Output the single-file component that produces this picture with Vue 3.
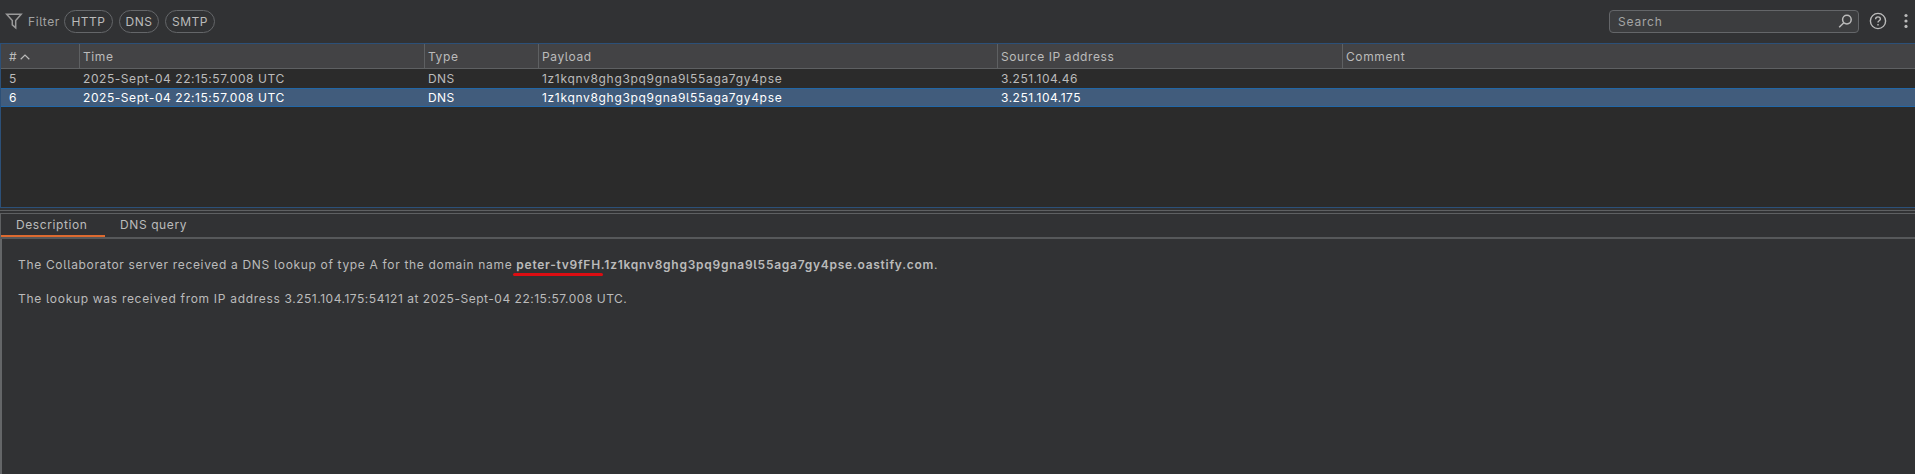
<script setup>
const filters = [
  { name: 'HTTP', kind: 'http' },
  { name: 'DNS', kind: 'dns' },
  { name: 'SMTP', kind: 'smtp' },
]
const columns = ['#', 'Time', 'Type', 'Payload', 'Source IP address', 'Comment']
const payload = '1z1kqnv8ghg3pq9gna9l55aga7gy4pse'
const rows = [
  { id: 5, time: '2025-Sept-04 22:15:57.008 UTC', type: 'DNS', ip: '3.251.104.46' },
  { id: 6, time: '2025-Sept-04 22:15:57.008 UTC', type: 'DNS', ip: '3.251.104.175', selected: true },
]
</script>

<template>
  <div class="panel">
    <header class="toolbar">
      <svg class="funnel" width="18" height="18" viewBox="0 0 18 18">
        <path d="M1.6 2.2H16.2L10.7 8.6V15.9L7.3 12.9V8.6Z" />
      </svg>
      <span class="filter-label">Filter</span>
      <button v-for="f in filters" :key="f.name" class="chip" :class="f.kind">{{ f.name }}</button>
      <div class="search">
        <span>Search</span>
        <svg width="15" height="15" viewBox="0 0 15 15">
          <circle cx="8.9" cy="5.6" r="4.3" />
          <path d="M5.8 8.7L1.2 13.3" />
        </svg>
      </div>
      <svg class="help" width="18" height="18" viewBox="0 0 18 18">
        <circle cx="9" cy="9" r="7.6" />
        <path d="M6.6 7.2C6.6 4.2 11.4 4.2 11.4 7C11.4 8.8 9 8.8 9 10.5" />
        <path d="M9 12V13.4" />
      </svg>
      <svg class="more" width="4" height="16" viewBox="0 0 4 16">
        <circle cx="2" cy="2.5" r="1.6" />
        <circle cx="2" cy="8" r="1.6" />
        <circle cx="2" cy="13.4" r="1.6" />
      </svg>
    </header>

    <section class="table">
      <div class="grid head">
        <div v-for="(c, i) in columns" :key="c" class="cell">
          {{ c }}
          <svg v-if="i === 0" class="sort" width="10" height="6" viewBox="0 0 10 6">
            <path d="M.7 5.2L5 1L9.3 5.2" />
          </svg>
        </div>
      </div>
      <div v-for="r in rows" :key="r.id" class="grid row" :class="{ selected: r.selected }">
        <div class="cell">{{ r.id }}</div>
        <div class="cell time">{{ r.time }}</div>
        <div class="cell type">{{ r.type }}</div>
        <div class="cell payload">{{ payload }}</div>
        <div class="cell ip">{{ r.ip }}</div>
        <div class="cell"></div>
      </div>
    </section>

    <div class="splitter"></div>

    <nav class="tabs">
      <div class="tab active">Description</div>
      <div class="tab">DNS query</div>
    </nav>

    <main class="details">
      <p>
        <span class="lead">The Collaborator server received a DNS lookup of type A for the domain name</span>&nbsp;<b class="domain"><span class="sub">peter-tv9fFH</span>.{{ payload }}.oastify.com</b>.
      </p>
      <p class="second">
        <span class="words">The lookup was received from IP address</span>&nbsp;<span class="figures">3.251.104.175:54121 at 2025-Sept-04 22:15:57.008 UTC.</span>
      </p>
    </main>
  </div>
</template>

<style>
body { background: #313234; }
</style>

<style scoped>
.panel {
  box-sizing: border-box;
  height: 474px;
  display: flex;
  flex-direction: column;
  overflow: hidden;
  background: #313234;
  color: #bbbbbb;
  font: 12px/18px Inter, "Liberation Sans", sans-serif;
  font-feature-settings: "cv05";
  letter-spacing: 0.6px;
  white-space: nowrap;
}
svg { fill: none; stroke: #bbbbbb; flex: none; }
.toolbar { height: 43px; flex: none; display: flex; align-items: flex-start; }
.funnel { margin: 12px 0 0 5px; stroke: #9a9a9a; stroke-width: 1.5; }
.filter-label { width: 36px; margin: 13px 0 0 5px; color: #a2a2a2; }
.chip {
  box-sizing: border-box;
  height: 23px;
  margin: 10px 6px 0 0;
  padding: 0;
  border: 1px solid #646669;
  border-radius: 12px;
  background: transparent;
  color: inherit;
  font: inherit;
  letter-spacing: 0.5px;
}
.http { width: 49px; }
.dns { width: 40px; }
.smtp { width: 50px; }
.search {
  box-sizing: border-box;
  display: flex;
  align-items: center;
  justify-content: space-between;
  width: 250px;
  height: 23px;
  margin: 10px 10px 0 auto;
  padding: 0 5px 0 8px;
  border: 1px solid #646669;
  border-radius: 4px;
  background: #3c3d3f;
  color: #a5a5a5;
  letter-spacing: 0.8px;
}
.search svg { stroke-width: 1.5; }
.help { margin: 12px 17px 0 0; stroke-width: 1.4; }
.more { margin: 13px 7px 0 0; fill: #bbbbbb; stroke: none; }

.table {
  box-sizing: border-box;
  height: 165px;
  flex: none;
  border: solid #2c5078;
  border-width: 1px 0 1px 1px;
  background: #2b2b2b;
}
.grid { display: grid; grid-template-columns: 78px 345px 114px 459px 345px 1fr; }
.cell { box-sizing: border-box; padding-left: 4px; }
.cell:first-child { padding-left: 8px; }
.head { height: 25px; background: #434345; border-bottom: 1px solid #5e6062; box-sizing: border-box; }
.head .cell { padding-top: 4px; border-left: 1px solid #5e6062; padding-left: 3px; }
.head .cell:first-child { border-left: 0; padding-left: 8px; }
.sort { margin: 0 0 1px -1px; stroke-width: 1.2; }
.row { height: 19px; line-height: 19px; }
.time { letter-spacing: 0.56px; }
.type { letter-spacing: 0.4px; }
.payload { letter-spacing: 0.68px; }
.ip { letter-spacing: 0.5px; }
.selected {
  box-sizing: border-box;
  border: solid #2167a8;
  border-width: 1px 0;
  background: #415c7c;
  color: #ffffff;
  line-height: 17px;
}

.splitter {
  box-sizing: border-box;
  height: 6px;
  flex: none;
  border-bottom: 1px solid #5e6062;
  background: linear-gradient(#5e6062, #5e6062) 0 2px / 100% 1px no-repeat;
}
.tabs {
  box-sizing: border-box;
  height: 25px;
  flex: none;
  display: flex;
  border-left: 1px solid #5e6062;
  border-bottom: 2px solid #56585a;
}
.tab { box-sizing: border-box; height: 23px; padding: 2px 15px 0; }
.active { width: 104px; border-bottom: 2px solid #dd6a30; }
.details {
  flex: 1;
  border-left: 2px solid #646668;
  padding: 17px 0 0 16px;
}
p { margin: 0; }
.second { margin-top: 16px; }
.lead { letter-spacing: 0.67px; }
.words { letter-spacing: 0.7px; }
.figures { letter-spacing: 0.52px; }
.domain { font-weight: 600; letter-spacing: 0.74px; }
.sub { position: relative; }
.sub::after {
  content: "";
  position: absolute;
  left: -3px;
  right: -2px;
  top: 16px;
  height: 3px;
  border-radius: 2px;
  background: #dc0d12;
}
</style>
